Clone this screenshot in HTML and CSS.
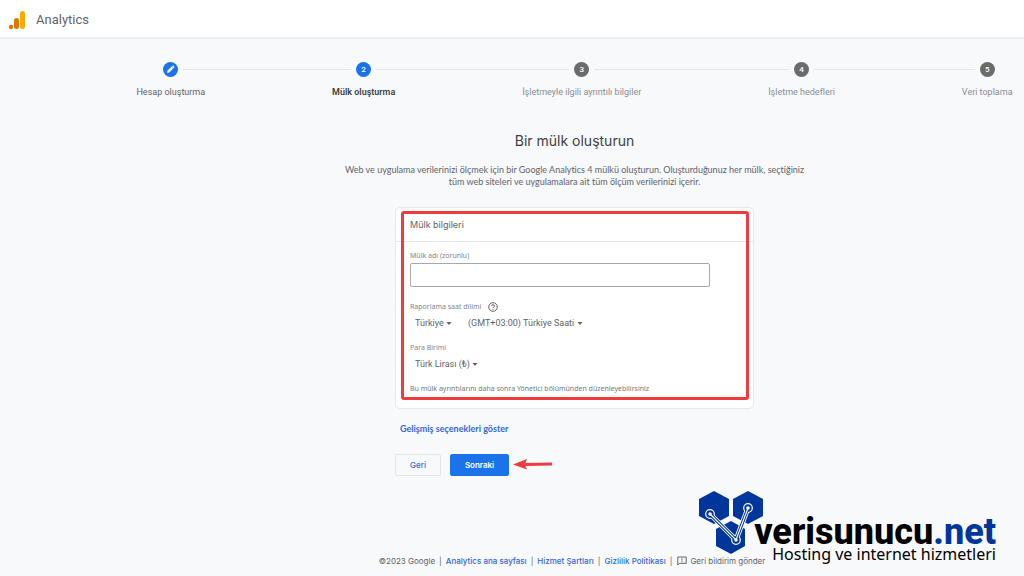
FILE: index.html
```html
<!DOCTYPE html>
<html lang="tr">
<head>
<meta charset="utf-8">
<meta name="viewport" content="width=device-width, initial-scale=1">
<title>Analytics</title>
<link rel="stylesheet" href="styles.css">
</head>
<body>
<header class="topbar">
  <svg class="topbar-logo" width="18" height="20" viewBox="0 0 18 20" aria-hidden="true">
    <rect x="12" y="1" width="5" height="18" rx="2.500" fill="#f9ab00"/>
    <rect x="6" y="8" width="5" height="11" rx="2.500" fill="#e37400"/>
    <circle cx="3" cy="17" r="2.200" fill="#e37400"/>
  </svg>
  <span class="topbar-name">Analytics</span>
</header>

<div class="page">
  <nav class="stepper" aria-label="Kurulum adımları">
    <ol class="steps">
      <li class="step step-done">
        <span class="step-track"><span class="step-dot">
          <svg width="9" height="9" viewBox="0 0 9 9" aria-hidden="true"><path d="M1.4 7.6 1.7 5.8 5.4 2.1 6.9 3.6 3.2 7.3ZM5.9 1.6 6.6.9Q7 .7 7.4 1L8 1.6Q8.300 2 8 2.400L7.400 3.100Z" fill="#fff" stroke="#fff" stroke-width=".5"/></svg>
        </span></span>
        <span class="step-label">Hesap oluşturma</span>
      </li>
      <li class="step step-current" aria-current="step">
        <span class="step-track"><span class="step-dot">2</span></span>
        <span class="step-label">Mülk oluşturma</span>
      </li>
      <li class="step">
        <span class="step-track"><span class="step-dot">3</span></span>
        <span class="step-label">İşletmeyle ilgili ayrıntılı bilgiler</span>
      </li>
      <li class="step">
        <span class="step-track"><span class="step-dot">4</span></span>
        <span class="step-label">İşletme hedefleri</span>
      </li>
      <li class="step">
        <span class="step-track"><span class="step-dot">5</span></span>
        <span class="step-label">Veri toplama</span>
      </li>
    </ol>
  </nav>

  <main class="content">
    <h1 class="title">Bir mülk oluşturun</h1>
    <p class="intro">Web ve uygulama verilerinizi ölçmek için bir Google Analytics 4 mülkü oluşturun. Oluşturduğunuz her mülk, seçtiğiniz<br>tüm web siteleri ve uygulamalara ait tüm ölçüm verilerinizi içerir.</p>

    <form class="form">
      <section class="card">
        <h2 class="card-title">Mülk bilgileri</h2>
        <div class="card-body">
          <label class="label" for="property-name">Mülk adı (zorunlu)</label>
          <input class="text-input" id="property-name" type="text" required>

          <div class="label-row">
            <label class="label" for="country">Raporlama saat dilimi</label>
            <svg width="10" height="10" viewBox="0 0 10 10" fill="none" stroke="#5f6368" aria-hidden="true"><circle cx="5" cy="5" r="4.300"/><path d="M3.600 4.100Q3.600 2.700 5 2.700T6.400 4Q6.400 4.700 5.600 5.100 5 5.400 5 6.100M5 6.900V7.800"/></svg>
          </div>
          <div class="select-row">
            <span class="select"><select id="country"><option>Türkiye</option></select><svg class="caret" viewBox="0 0 6 3" aria-hidden="true"><path d="M.5 0h5L3 3Z"/></svg></span>
            <span class="select"><select aria-label="Saat dilimi"><option>(GMT+03:00) Türkiye Saati</option></select><svg class="caret" viewBox="0 0 6 3" aria-hidden="true"><path d="M.5 0h5L3 3Z"/></svg></span>
          </div>

          <label class="label label-currency" for="currency">Para Birimi</label>
          <div class="select-row">
            <span class="select"><select id="currency"><option>Türk Lirası (₺)</option></select><svg class="caret" viewBox="0 0 6 3" aria-hidden="true"><path d="M.5 0h5L3 3Z"/></svg></span>
          </div>
          <p class="note">Bu mülk ayrıntılarını daha sonra Yönetici bölümünden düzenleyebilirsiniz</p>
        </div>
        <div class="highlight"></div>
      </section>

      <a class="advanced" href="#">Gelişmiş seçenekleri göster</a>

      <div class="actions">
        <button class="button" type="button">Geri</button>
        <button class="button button-primary" type="submit">Sonraki</button>
        <svg class="arrow" width="40" height="12" viewBox="0 0 40 12" aria-hidden="true"><path d="M0 5.500 14 0 12.500 4 39 3.500V6.500L12.500 7 14 10.500Z" fill="#ef3b3e"/></svg>
      </div>
    </form>
  </main>

  <footer class="footer">
    <span>©2023 Google</span><span>|</span>
    <a href="#">Analytics ana sayfası</a><span>|</span>
    <a href="#">Hizmet Şartları</a><span>|</span>
    <a href="#">Gizlilik Politikası</a><span>|</span>
    <button class="feedback" type="button">
      <svg width="10" height="10" viewBox="0 0 10 10" fill="none" stroke="#5f6368" aria-hidden="true"><path d="M.8 9V1H9.200V7.300H2.500ZM5 2.300V4.600M5 5.300V6.200"/></svg>
      Geri bildirim gönder
    </button>
  </footer>
</div>

<aside class="brand">
  <svg class="brand-mark" width="64" height="64" viewBox="0 0 64 64" aria-hidden="true">
    <g fill="#00359c">
      <path d="M15 0 30 8V25L15 33 0 25V8Z"/>
      <path d="M49 0 64 8V25L49 33 34 25V8Z"/>
      <path d="M32 30 46 38V55L32 63 17 55V38Z"/>
    </g>
    <path d="M11 23 37 49 49 17" fill="none" stroke="#fff" stroke-width="5"/>
    <g fill="#00359c" stroke="#fff" stroke-width="1.200"><circle cx="11" cy="23" r="4.300"/><circle cx="49" cy="17" r="4.300"/><circle cx="37" cy="49" r="4.300"/></g>
    <path d="M11 23 37 49 49 17" fill="none" stroke="#00359c" stroke-width="3.200"/>
    <path d="M11 23 37 49 49 17" fill="none" stroke="#fff" stroke-width="1.200"/>
    <g fill="#fff"><circle cx="11" cy="23" r="1.800"/><circle cx="49" cy="17" r="1.800"/><circle cx="37" cy="49" r="1.800"/></g>
  </svg>
  <div class="brand-text">
    <span class="brand-name">verisunucu<span class="brand-tld">.net</span></span>
    <span class="brand-tagline">Hosting ve internet hizmetleri</span>
  </div>
</aside>
</body>
</html>
```
FILE: styles.css
```css
* { box-sizing: border-box; }

body {
  margin: 0;
  min-height: 100vh;
  background: #f8f9fb;
  color: #5f6368;
  font: 9px/12px Roboto, "Noto Sans", sans-serif;
  font-variant-ligatures: none;
  position: relative;
  display: flex;
  flex-direction: column;
}

a { color: #3367d6; text-decoration: none; }
button, input, select { font: inherit; color: inherit; }
h1, h2, p, ol { margin: 0; padding: 0; }

.topbar {
  display: flex;
  align-items: center;
  gap: 10px;
  height: 39px;
  padding-left: 8px;
  padding-top: 2px;
  background: #fff;
  border-bottom: 2px solid #eeeff1;
}
.topbar-name { font-size: 13px; line-height: 20px; }

.page {
  flex: 1;
  display: flex;
  flex-direction: column;
  padding-left: 125px;
}

.stepper { overflow: hidden; padding-top: 23px; }
.steps { display: flex; list-style: none; margin: 0 -52px; }
.step {
  flex: 1 1 auto;
  display: flex;
  flex-direction: column;
  gap: 9px;
  text-align: center;
  color: #8a8d91;
}
.step-track { display: flex; align-items: center; gap: 5px; }
.step-track::before, .step-track::after {
  content: "";
  flex: 1;
  height: 1px;
  background: #e3e5e8;
}
.step:first-child .step-track::before,
.step:last-child .step-track::after { visibility: hidden; }
.step-dot {
  display: flex;
  align-items: center;
  justify-content: center;
  width: 15px;
  height: 15px;
  border-radius: 50%;
  background: #6b6b6b;
  color: #fff;
  font-size: 8px;
  font-weight: 500;
}
.step-done .step-dot, .step-current .step-dot { background: #1a73e8; }
.step-done { color: #5f6368; }
.step-current { color: #3c4043; font-weight: 600; }

.content {
  display: flex;
  flex-direction: column;
  align-items: center;
}
.title {
  margin-top: 33px;
  font: 400 14px/20px Inter, sans-serif;
  color: #3c4043;
}
.intro {
  margin-top: 13px;
  font-family: Lato, sans-serif;
  text-align: center;
}

.form { width: 359px; margin-top: 19px; }
.card {
  position: relative;
  background: #fff;
  border: 1px solid #e6e8eb;
  border-radius: 5px;
}
.highlight {
  position: absolute;
  inset: 3px 4px 8px 5px;
  border: 3px solid #ef3b3e;
  border-radius: 3px;
  pointer-events: none;
}
.card-title {
  padding: 10px 14px;
  border-bottom: 1px solid #e6e8eb;
  font: 400 9px/13px Inter, sans-serif;
}
.card-body { padding: 8px 14px 13px; }
.label, .note { font-family: "Noto Sans", sans-serif; font-size: 7px; }
.label { display: block; color: #80868b; }
.text-input {
  display: block;
  width: 300px;
  max-width: 100%;
  height: 24px;
  margin-top: 1px;
  padding: 0 6px;
  background: #fff;
  border: 1px solid #a5a9ad;
  border-radius: 2px;
}
.label-row { display: flex; align-items: center; gap: 7px; margin-top: 14px; }
.select-row { display: flex; gap: 16px; margin-top: 4px; padding-left: 5px; }
.select { display: flex; align-items: center; gap: 2px; }
.select select {
  appearance: none;
  margin: 0;
  padding: 0;
  border: 0;
  background: none;
  height: 12px;
}
.caret { width: 6px; height: 3px; fill: #5f6368; }
.label-currency { margin-top: 13px; }
.note { margin-top: 13px; color: #74797e; }

.advanced {
  display: inline-block;
  margin: 14px 5px 0;
  font-family: Lato, sans-serif;
  font-weight: 700;
}
.actions { display: flex; align-items: center; margin-top: 19px; }
.button {
  height: 22px;
  padding: 0 14px;
  background: #f8f9fb;
  border: 1px solid #e3e5e8;
  border-radius: 2px;
  color: #3367d6;
  font-family: Inter, sans-serif;
  font-size: 8px;
  font-weight: 500;
}
.button-primary {
  margin-left: 9px;
  background: #1a73e8;
  border-color: #1a73e8;
  color: #fff;
  font-weight: 600;
}
.arrow { margin-left: 4px; }

.footer {
  display: flex;
  justify-content: center;
  gap: 4px;
  margin-top: auto;
  padding: 0 5px 9px 0;
  font-family: Inter, sans-serif;
  font-size: 8px;
}
.footer a { font-weight: 500; }
.feedback {
  display: flex;
  align-items: center;
  gap: 3px;
  margin-left: 1px;
  padding: 0;
  border: 0;
  background: none;
}

.brand {
  position: absolute;
  right: 28px;
  bottom: 15px;
  color: #000;
}
.brand-mark { position: absolute; right: 233px; bottom: 6px; }
.brand-text { display: flex; flex-direction: column; align-items: flex-end; }
.brand-name { font: 800 36px/30px Roboto, sans-serif; }
.brand-tld { color: #00359c; }
.brand-tagline { font: 400 16px/14px "Noto Sans", sans-serif; }
```
